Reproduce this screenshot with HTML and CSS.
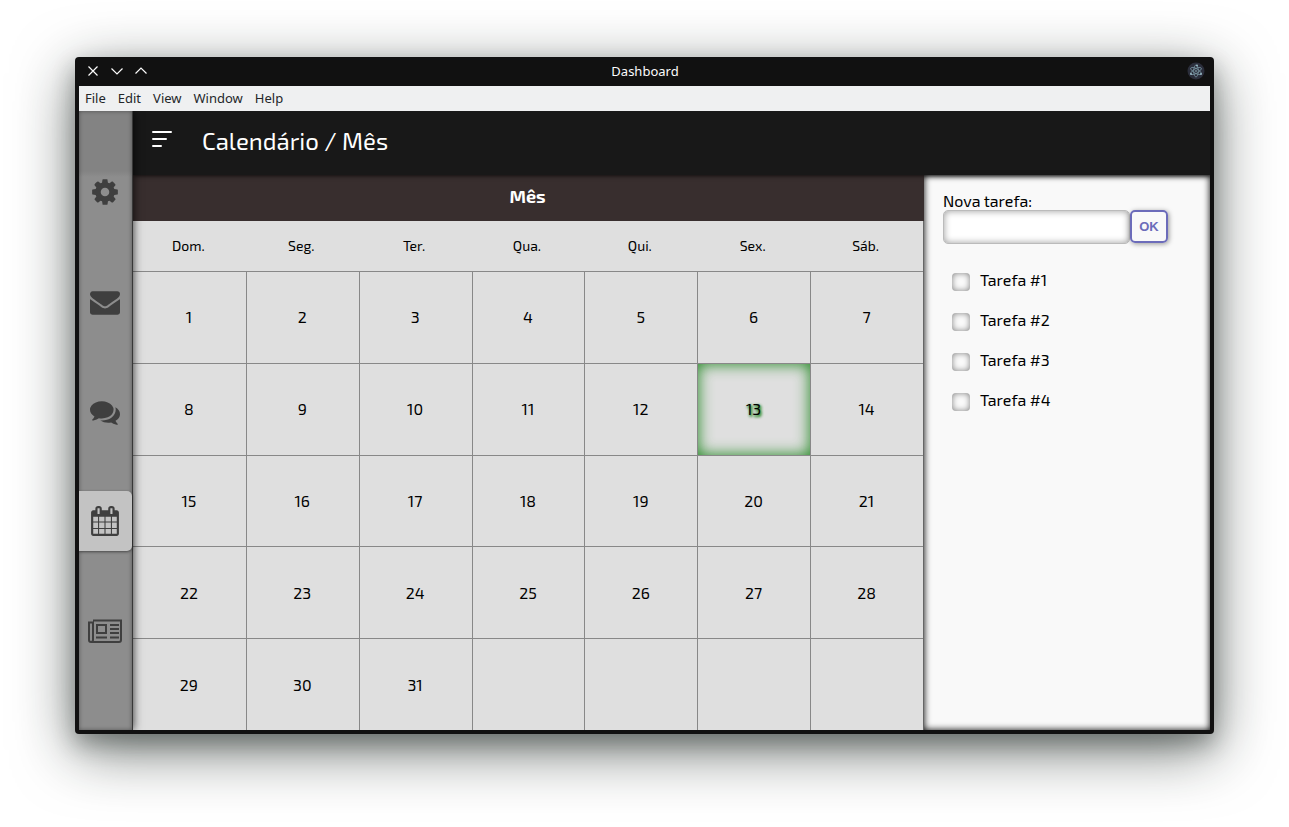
FILE: index.html
```html
<!DOCTYPE html>
<html lang="pt">
<head>
<meta charset="utf-8">
<title>Dashboard</title>
<link rel="stylesheet" href="styles.css">
</head>
<body>
<div class="window">
  <div class="titlebar">
    <div class="controls">
      <button class="control" aria-label="Fechar"><svg viewBox="0 0 16 16"><path d="M3.500 3.500l9 9M12.500 3.500l-9 9"/></svg></button>
      <button class="control" aria-label="Minimizar"><svg viewBox="0 0 16 16"><path d="M2.500 5.500L8 11l5.500-5.500"/></svg></button>
      <button class="control" aria-label="Maximizar"><svg viewBox="0 0 16 16"><path d="M2.500 10.500L8 5l5.500 5.500"/></svg></button>
    </div>
    <span class="window-title">Dashboard</span>
    <svg class="app-icon" viewBox="0 0 18 18"><circle cx="9" cy="9" r="8.500" fill="#2b2e3b"/><g fill="none" stroke="#7f9fab" stroke-width=".7"><ellipse cx="9" cy="9" rx="6" ry="2.300" transform="rotate(-30 9 9)"/><ellipse cx="9" cy="9" rx="6" ry="2.300" transform="rotate(30 9 9)"/><ellipse cx="9" cy="9" rx="6" ry="2.300" transform="rotate(90 9 9)"/></g><g fill="#9fc3cf"><circle cx="9" cy="9" r=".8"/><circle cx="4" cy="12" r=".9"/><circle cx="14" cy="12" r=".9"/><circle cx="10" cy="3.500" r=".9"/></g></svg>
  </div>
  <nav class="menubar">
    <button class="menu">File</button><button class="menu">Edit</button><button class="menu">View</button><button class="menu">Window</button><button class="menu">Help</button>
  </nav>
  <div class="app">
    <nav class="sidebar">
      <a class="nav" href="#config" aria-label="Configurações"><svg class="icon" viewBox="0 0 1792 1792"><path d="M1152 896q0-106-75-181t-181-75-181 75-75 181 75 181 181 75 181-75 75-181zm512-109v222q0 12-8 23t-20 13l-185 28q-19 54-39 91 35 50 107 138 10 12 10 25t-9 23q-27 37-99 108t-94 71q-12 0-26-9l-138-108q-44 23-91 38-16 136-29 186-7 28-36 28h-222q-14 0-24.500-8.500t-11.500-21.500l-28-184q-49-16-90-37l-141 107q-10 9-25 9-14 0-25-11-126-114-165-168-7-10-7-23 0-12 8-23 15-21 51-66.500t54-70.500q-27-50-41-99l-183-27q-13-2-21-12.500t-8-23.500v-222q0-12 8-23t19-13l186-28q14-46 39-92-40-57-107-138-10-12-10-24 0-10 9-23 26-36 98.500-107.500t94.500-71.500q13 0 26 10l138 107q44-23 91-38 16-136 29-186 7-28 36-28h222q14 0 24.500 8.500t11.500 21.500l28 184q49 16 90 37l142-107q9-9 24-9 13 0 25 10 129 119 165 170 7 8 7 22 0 12-8 23-15 21-51 66.500t-54 70.500q26 50 41 98l183 28q13 2 21 12.500t8 23.500z"/></svg></a>
      <a class="nav" href="#email" aria-label="E-mail"><svg class="icon" viewBox="0 0 1792 1792"><path d="M1792 710v794q0 66-47 113t-113 47h-1472q-66 0-113-47t-47-113v-794q44 49 101 87 362 246 497 345 57 42 92.500 65.500t94.500 48 110 24.500h2q51 0 110-24.500t94.500-48 92.500-65.500q170-123 498-345 57-39 100-87zm0-294q0 79-49 151t-122 123q-376 261-468 325-10 7-42.500 31t-54 38.500-52 32.500-57.500 27-50 9h-2q-23 0-50-9t-57.500-27-52-32.500-54-38.500-42.500-31q-91-64-262-182.500t-205-142.500q-62-42-117-115.500t-55-136.500q0-78 41.500-130t118.500-52h1472q65 0 112.500 47t47.500 113z"/></svg></a>
      <a class="nav" href="#chat" aria-label="Mensagens"><svg class="icon" viewBox="0 0 1792 1792"><path d="M1408 768q0 139-94 257t-256.500 186.500-353.500 68.500q-86 0-176-16-124 88-278 128-36 9-86 16h-3q-11 0-20.500-8t-11.500-21q-1-3-1-6.500t.5-6.500 2-6l2.500-5 3.500-5.500 4-5 4.500-5 4-4.500q5-6 23-25t26-29.500 22.500-29 25-38.500 20.500-44q-124-72-195-177t-71-224q0-139 94-257t256.500-186.500 353.500-68.500 353.500 68.500 256.500 186.500 94 257zm384 256q0 120-71 224.500t-195 176.500q10 24 20.500 44t25 38.500 22.500 29 26 29.500 23 25q1 1 4 4.500t4.500 5 4 5 3.500 5.500l2.500 5 2 6 .5 6.500-1 6.500q-3 14-13 22t-22 7q-50-7-86-16-154-40-278-128-90 16-176 16-271 0-472-132 58 4 88 4 161 0 309-45t264-129q125-92 192-212t67-254q0-77-23-152 129 71 204 178t75 230z"/></svg></a>
      <a class="nav active" href="#calendario" aria-label="Calendário"><svg class="icon" viewBox="0 0 1792 1792"><path d="M192 1664h288v-288h-288v288zm352 0h320v-288h-320v288zm-352-352h288v-320h-288v320zm352 0h320v-320h-320v320zm-352-384h288v-288h-288v288zm736 736h320v-288h-320v288zm-384-736h320v-288h-320v288zm768 736h288v-288h-288v288zm-384-352h320v-320h-320v320zm-352-864v-288q0-13-9.500-22.500t-22.500-9.500h-64q-13 0-22.500 9.500t-9.500 22.500v288q0 13 9.500 22.500t22.500 9.500h64q13 0 22.500-9.500t9.500-22.500zm736 864h288v-320h-288v320zm-384-384h320v-288h-320v288zm384 0h288v-288h-288v288zm32-480v-288q0-13-9.500-22.500t-22.500-9.500h-64q-13 0-22.500 9.500t-9.500 22.500v288q0 13 9.500 22.500t22.500 9.500h64q13 0 22.500-9.500t9.500-22.500zm384-64v1280q0 52-38 90t-90 38h-1408q-52 0-90-38t-38-90v-1280q0-52 38-90t90-38h128v-96q0-66 47-113t113-47h64q66 0 113 47t47 113v96h384v-96q0-66 47-113t113-47h64q66 0 113 47t47 113v96h128q52 0 90 38t38 90z"/></svg></a>
      <a class="nav" href="#noticias" aria-label="Notícias"><svg class="icon wide" viewBox="0 0 34 30"><path fill="none" stroke="#3f3f3f" stroke-width="2" d="M5 4.500h28v19.500q0 2-2 2H3q-2 0-2-2V6.500h4v17.500q0 2-2 2M9 9h9v8H9zM8 21.500h11M22 9h9M22 13h9M22 17h9M22 21.500h9"/></svg></a>
    </nav>
    <div class="main">
      <header class="header">
        <button class="toggle" aria-label="Menu"><svg viewBox="0 0 20 18"><path d="M1 2h18M1 9h13M1 16h8"/></svg></button>
        <h1 class="page-title">Calendário / Mês</h1>
      </header>
      <div class="content">
        <section class="calendar">
          <h2 class="month">Mês</h2>
          <div class="grid">
            <table class="days">
              <thead><tr><th>Dom.</th><th>Seg.</th><th>Ter.</th><th>Qua.</th><th>Qui.</th><th>Sex.</th><th>Sáb.</th></tr></thead>
              <tbody>
                <tr><td>1</td><td>2</td><td>3</td><td>4</td><td>5</td><td>6</td><td>7</td></tr>
                <tr><td>8</td><td>9</td><td>10</td><td>11</td><td>12</td><td class="today">13</td><td>14</td></tr>
                <tr><td>15</td><td>16</td><td>17</td><td>18</td><td>19</td><td>20</td><td>21</td></tr>
                <tr><td>22</td><td>23</td><td>24</td><td>25</td><td>26</td><td>27</td><td>28</td></tr>
                <tr><td>29</td><td>30</td><td>31</td><td></td><td></td><td></td><td></td></tr>
              </tbody>
            </table>
          </div>
        </section>
        <aside class="tasks">
          <form class="new-task">
            <label class="task-label" for="task">Nova tarefa:</label>
            <div class="entry"><input class="task-input" id="task" type="text"><button class="ok" type="button">OK</button></div>
          </form>
          <ul class="task-list">
            <li><label class="task"><input class="check" type="checkbox">Tarefa #1</label></li>
            <li><label class="task"><input class="check" type="checkbox">Tarefa #2</label></li>
            <li><label class="task"><input class="check" type="checkbox">Tarefa #3</label></li>
            <li><label class="task"><input class="check" type="checkbox">Tarefa #4</label></li>
          </ul>
        </aside>
      </div>
    </div>
  </div>
</div>
</body>
</html>
```
FILE: styles.css
```css
* { box-sizing: border-box; }
body {
  margin: 0;
  min-height: 100vh;
  padding: 57px 75px 93px;
  display: flex;
  background: #fff;
  color: #000;
  font: 16px/20px "Exo 2", "Noto Sans", sans-serif;
}
button { font: inherit; color: inherit; background: none; border: 0; padding: 0; }
.window {
  flex: 1;
  min-width: 0;
  display: flex;
  flex-direction: column;
  padding: 0 4px 4px;
  border-radius: 4px;
  background: #111;
  box-shadow: 0 16px 60px rgba(18, 28, 24, .6), 0 10px 22px rgba(18, 28, 24, .3);
}
.titlebar {
  height: 29px;
  display: grid;
  grid-template-columns: 1fr auto 1fr;
  align-items: center;
  padding: 0 5px 2px 6px;
  color: #fcfcfc;
  font: 13px/18px "Noto Sans", sans-serif;
}
.controls { display: flex; gap: 8px; }
.control { width: 16px; height: 16px; }
.control svg { display: block; width: 16px; height: 16px; fill: none; stroke: #fcfcfc; stroke-width: 1.2; }
.app-icon { width: 18px; height: 18px; justify-self: end; }
.menubar {
  height: 25px;
  display: flex;
  align-items: center;
  gap: 12px;
  padding: 0 6px 2px;
  background: #eff0f1;
  color: #232629;
  font: 13px/18px "Noto Sans", sans-serif;
}
.app { flex: 1; display: flex; background: #dfdfdf; }
.sidebar {
  position: relative;
  z-index: 3;
  flex: none;
  width: 54px;
  padding: 51px 0 69px;
  border-right: 1px solid #383838;
  display: flex;
  flex-direction: column;
  justify-content: space-between;
  background: linear-gradient(#838383 60px, #8d8d8d 66px);
  box-shadow: inset 0 0 4px rgba(0, 0, 0, .4), 0 0 9px rgba(0, 0, 0, .8);
  clip-path: inset(0 -16px 0 0);
}
.nav {
  height: 60px;
  padding-right: 1px;
  display: flex;
  align-items: center;
  justify-content: center;
  border-radius: 0 5px 5px 0;
}
.nav.active { background: #c3c3c3; box-shadow: 0 1px 3px rgba(0, 0, 0, .5); }
.icon { width: 30px; height: 30px; fill: #3f3f3f; }
.icon.wide { width: 34px; }
.main { flex: 1; min-width: 0; display: flex; flex-direction: column; }
.header {
  position: relative;
  z-index: 2;
  height: 64px;
  display: flex;
  align-items: center;
  gap: 30px;
  padding: 0 19px 4px;
  background: #181818;
  color: #fff;
  box-shadow: 0 0 5px #000;
  clip-path: inset(0 0 -8px 0);
}
.toggle { width: 20px; height: 18px; margin-bottom: 4px; }
.toggle svg { display: block; width: 20px; height: 18px; stroke: #fff; stroke-width: 2; stroke-linecap: round; }
.page-title { margin: 0; font-size: 24px; line-height: 32px; font-weight: 400; }
.content { flex: 1; display: flex; }
.calendar { flex: 1; display: flex; flex-direction: column; }
.month {
  margin: 0;
  height: 46px;
  padding-right: 2px;
  background: #382e2e;
  color: #fff;
  font-size: 18px;
  line-height: 42px;
  text-align: center;
}
.grid { flex: 1; display: grid; border-right: 1px solid #666; }
.days {
  width: 100%;
  height: 100%;
  table-layout: fixed;
  border-collapse: separate;
  border-spacing: 0;
}
.days th { height: 50px; padding: 0 2px 0 0; font-size: 14px; font-weight: 400; }
.days td {
  padding: 0 1px 0 0;
  height: 80px;
  border: 0 solid #888;
  border-width: 1px 0 0 1px;
  text-align: center;
}
.days td:first-child { border-left: 0; }
.days td.today {
  box-shadow: inset 0 0 15px #1e861e;
  text-shadow: 1px 2px 3px #1e861e, 1px 1px 3px #1e861e;
}
.tasks {
  flex: none;
  width: 286px;
  padding: 16px 19px;
  background: #f9f9f9;
  box-shadow: inset 0 0 7px #000;
}
.task-label { display: block; line-height: 19px; }
.entry { display: flex; }
.task-input {
  width: 187px;
  height: 34px;
  padding: 4px 8px;
  border: 1px solid #bbb;
  border-radius: 5px;
  background: #fff;
  box-shadow: inset 0 0 7px rgba(0, 0, 0, .4);
  font: inherit;
}
.ok {
  width: 38px;
  height: 33px;
  border: 2px solid #6c6cba;
  border-radius: 5px;
  color: #6c6cba;
  font: bold 13px/16px "Liberation Sans", sans-serif;
  box-shadow: 1px 1px 5px rgba(0, 0, 0, .4);
}
.task-list { list-style: none; margin: 16px 0 0; padding: 0; }
.task { display: flex; align-items: center; gap: 10px; height: 40px; padding-left: 9px; }
.check {
  appearance: none;
  width: 18px;
  height: 18px;
  margin: 4px 0 0;
  border-radius: 4px;
  background: #fafafa;
  box-shadow: inset 0 0 6px rgba(0, 0, 0, .5);
}
```
